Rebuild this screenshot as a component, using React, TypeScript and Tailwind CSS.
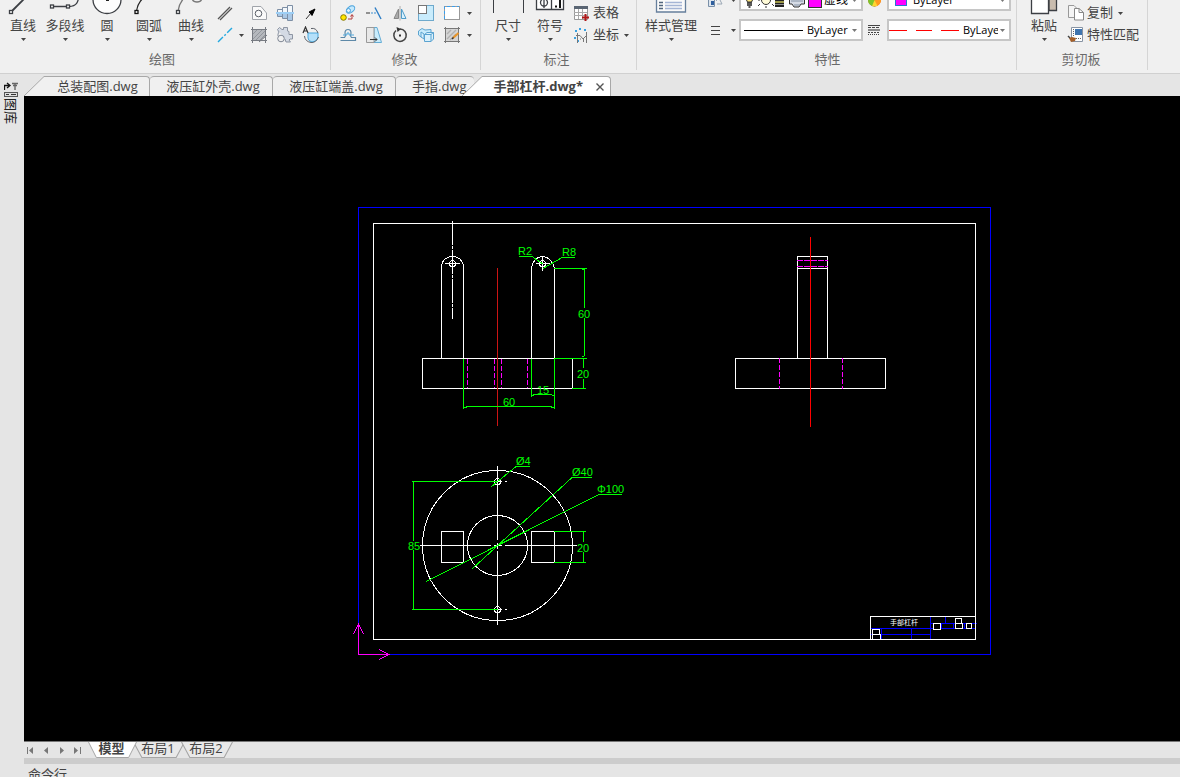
import type { ReactNode } from "react";

// small black triangle used under / next to every drop-down command
function Caret({ className = "text-[#444]" }: { className?: string }) {
  return (
    <svg width="5" height="3" viewBox="0 0 5 3" className={`shrink-0 ${className}`}>
      <path d="M0 0H5L2.5 3Z" fill="currentColor" />
    </svg>
  );
}

function Group({ label, className = "", children }: { label: string; className?: string; children: ReactNode }) {
  return (
    <section className={`flex shrink-0 flex-col border-r border-[#d5d5d5] ${className}`}>
      <div className="flex h-12 items-end overflow-hidden">{children}</div>
      <h2 className="flex h-[22px] items-center justify-center pt-0.5 text-[13px] text-[#6a6a6a]">{label}</h2>
    </section>
  );
}

function BigButton({ label, className = "w-[42px]", children }: { label: string; className?: string; children: ReactNode }) {
  return (
    <button className={`flex shrink-0 flex-col items-center pb-1 ${className}`}>
      <svg width="34" height="32" viewBox="-1 0 34 32" fill="none" stroke="#3c3f44" strokeWidth="1.3">
        {children}
      </svg>
      <span className="text-[13px] leading-[18px] whitespace-nowrap">{label}</span>
      <span className="flex h-[10px] items-center">
        <Caret />
      </span>
    </button>
  );
}

function Tool({ label, children }: { label: string; children: ReactNode }) {
  return (
    <button aria-label={label} className="flex h-[22px] w-[26px] items-center justify-center">
      <svg width="18" height="18" viewBox="0 0 18 18" fill="none" stroke="#5b6068" strokeWidth="1">
        {children}
      </svg>
    </button>
  );
}

function DrawGroup() {
  return (
    <Group label="绘图" className="w-[331px] pl-0.5 [&>h2]:-ml-2">
      <BigButton label="直线">
        <path d="M5 27L19 13" strokeWidth="1.8" />
        <rect x="2.5" y="26.5" width="3" height="3" fill="#fff" />
      </BigButton>
      <BigButton label="多段线">
        <path d="M3 22.5H20C28 22 29 18 30 12" />
        <rect x="1.5" y="21" width="3" height="3" fill="#fff" />
        <rect x="17.5" y="21" width="3" height="3" fill="#fff" />
      </BigButton>
      <BigButton label="圆">
        <circle cx="16" cy="15.5" r="14" fill="#fdfdfd" />
        <rect x="15" y="15" width="3" height="2" fill="#222" stroke="none" />
      </BigButton>
      <BigButton label="圆弧">
        <path d="M3.5 27Q5 17 13 12" stroke="#222" />
        <rect x="2" y="26.5" width="3" height="3" fill="#fff" stroke="#111" />
      </BigButton>
      <BigButton label="曲线">
        <path d="M3 27Q4 19 10 13M17 13Q17 18 22 18T27 13" stroke="#777" />
        <rect x="1.5" y="26.5" width="3" height="3" fill="#fff" />
      </BigButton>
      <div className="flex flex-col pb-0.5">
        <div className="flex">
          <div className="w-[34px]">
            <Tool label="平行线">
              <path d="M2 15L14 3M4 16L16 4" stroke="#555" strokeWidth="1.3" />
            </Tool>
          </div>
          <Tool label="多边形">
            <path d="M2.5 2.5H11L16.5 9V15.5H2.5Z" fill="#fafafa" stroke="#a0a4aa" />
            <circle cx="8.5" cy="9.5" r="3.3" />
          </Tool>
          <Tool label="轴">
            <path d="M1.5 5.5H6.5V12.5H1.5ZM6.5 3.5H11.5V14.5H6.5ZM11.5 1.5H16.5V16.5H11.5Z" fill="#f3f7fb" stroke="#7d8fa5" />
            <path d="M2 10H6V12H2ZM7 10H11V14H7ZM12 10H16V16H12Z" fill="#a9c8e6" stroke="none" />
            <path d="M0 9H18" stroke="#fff" strokeWidth="2" />
            <path d="M0 9H18" stroke="#3b9eeb" />
          </Tool>
          <Tool label="箭头">
            <path d="M4 15L9 9" stroke="#333" />
            <path d="M13 5L7 8L8.5 9.5L10 11.5Z" fill="#000" stroke="#000" />
          </Tool>
        </div>
        <div className="flex">
          <div className="flex w-[34px] items-center">
            <Tool label="中心线">
              <path d="M2 16L16 2" stroke="#23a8e0" strokeWidth="1.4" strokeDasharray="7 2 2 2" />
            </Tool>
            <span className="ml-px">
              <Caret />
            </span>
          </div>
          <Tool label="填充">
            <path d="M2.5 3.5H15.5V11L11 14.5H2.5Z" fill="#b5b8bd" stroke="none" />
            <path d="M3 8L7 4M3 13L12 4M6 14L15 5M10 14L15 9" stroke="#92969c" />
            <path d="M1 3.5H17M1 14.5H17M2.5 1V17M15.5 1V17M9 16L17 9" stroke="#777b82" />
          </Tool>
          <Tool label="齿轮">
            <path
              d="M1.5 3.5L3.5 1.5L6 3.5H7.5V1.5H11.5V5L13 5.5V8.5H16.5V13H14L13 14L14.5 16H10L9 13M1.5 3.5L3 6L2 8V10"
              fill="#d4dae4"
              stroke="#8d95a3"
            />
            <circle cx="5" cy="12.5" r="3.3" fill="#f0f0f0" stroke="#7d8593" />
          </Tool>
          <Tool label="局部放大">
            <path d="M6 7H16V12Q14 16 10 16Q6 15 6 12Z" fill="#b5e0fa" stroke="#4aa8dd" />
            <path d="M9 2.5Q14 1.5 16 7M16.5 11Q14 17 9 16.5Q3 15.5 2.5 10" />
            <path d="M1 7L3.5 1L6 7M2 5H5" stroke="#333" strokeWidth="1.2" />
          </Tool>
        </div>
      </div>
    </Group>
  );
}

function ModifyGroup() {
  return (
    <Group label="修改" className="w-[150px] pl-1 [&>h2]:-ml-1.5">
      <div className="flex flex-col pb-0.5">
        <div className="flex items-center">
          <Tool label="复制对象">
            <ellipse cx="11.5" cy="5.5" rx="4.7" ry="3" transform="rotate(-35 11.5 5.5)" fill="#c6e9fc" stroke="#4aa3dd" />
            <circle cx="9.5" cy="6.5" r="2" fill="#dff3fd" stroke="#4aa3dd" />
            <circle cx="4.5" cy="13.5" r="2.8" fill="#ffe600" stroke="#8a7a00" />
            <path d="M9 15H13V11M11.5 12.5L13 10.5L14.5 12.5" stroke="#b33a3a" />
          </Tool>
          <Tool label="延伸">
            <path d="M1 9H5" stroke="#333" />
            <path d="M6 9H12" stroke="#3c8fd0" strokeDasharray="2 1" />
            <path d="M10 3.5L16 15" stroke="#2b7cc4" strokeWidth="1.4" />
          </Tool>
          <Tool label="镜像">
            <path d="M7.5 5V14.5H3Z" fill="#aaa" stroke="#888" />
            <path d="M10.5 5V14.5H15Z" fill="#d8f0fd" stroke="#4f9cc9" />
            <path d="M9 2V16.5" stroke="#aaa" />
          </Tool>
          <Tool label="缩放">
            <rect x="1.5" y="1.5" width="15" height="15" fill="#c9ecfc" stroke="#6ea9cc" />
            <rect x="1.5" y="1.5" width="8" height="8" fill="#fff" stroke="#777" />
          </Tool>
          <Tool label="拉伸">
            <rect x="1.5" y="2.5" width="15" height="13" fill="#fff" stroke="#999" />
            <path d="M1.5 15V2.5H16" stroke="#3b9eeb" strokeDasharray="3 2" />
          </Tool>
          <span className="ml-0.5">
            <Caret />
          </span>
        </div>
        <div className="flex items-center">
          <Tool label="偏移">
            <path d="M1.5 11.5H5.5Q7 10 6 7Q6 3.5 9 3.5T12 7Q11 10 12.5 11.5H16.5V14.5H1.5" stroke="#5e89a8" strokeWidth="1.2" />
            <path d="M4 9H8V7H10V9H15" stroke="#4ea8dd" />
          </Tool>
          <Tool label="移动">
            <path d="M9 1.5H12L16.5 16.5H9Z" fill="#c9ecfc" stroke="#64acd5" />
            <path d="M1.5 1.5H9V16.5H1.5Z" fill="#e8e8e8" stroke="#999" />
            <path d="M5 13.5H12M10 11.5L12 13.5L10 15.5" stroke="#333" />
          </Tool>
          <Tool label="旋转">
            <path d="M5 4.5A6.2 6.2 0 1 0 9 3" stroke="#444" strokeWidth="1.5" />
            <path d="M5.5 1L10 3L6.5 6Z" fill="#333" stroke="none" />
            <rect x="8" y="8.5" width="2" height="2" fill="#333" stroke="none" />
          </Tool>
          <Tool label="阵列">
            <path d="M1.5 5L5 2.5L8 4L14 3.5V8L4 11L1.5 9Z" fill="#c9ecfc" stroke="#5ba3d0" />
            <path d="M4 6V11L7 13V8ZM7.5 8.5L10 6.5H16.5V13L14 15.5H7.5ZM7.5 8.5H14V15.5M14 8.5L16.5 6.5" fill="#d9f1fd" stroke="#5ba3d0" />
          </Tool>
          <Tool label="编辑填充">
            <rect x="2.5" y="2.5" width="13" height="13" fill="#d5d5d5" stroke="#777" />
            <path d="M4 8L8 4M4 13L13 4M7 14L13 8" stroke="#b0b0b0" strokeWidth="1.4" />
            <path d="M1 2.5H17M1 15.5H17M2.5 1V17M15.5 1V17" stroke="#777" strokeDasharray="2 1" />
            <path d="M10 12L15.5 7" stroke="#e8952a" strokeWidth="2.2" />
            <path d="M9 13L10.5 11.5" stroke="#333" strokeWidth="1.5" />
          </Tool>
          <span className="ml-0.5">
            <Caret />
          </span>
        </div>
      </div>
    </Group>
  );
}

function AnnotateGroup() {
  return (
    <Group label="标注" className="w-[156px] pl-1.5 [&>h2]:-ml-2.5">
      <BigButton label="尺寸">
        <path d="M1.5 12V29M31.5 12V29" shapeRendering="crispEdges" />
      </BigButton>
      <BigButton label="符号">
        <path d="M2.5 10V25.5H29.5V10M17.5 10V25" fill="#fff" />
        <circle cx="10" cy="18.5" r="3.5" />
        <path d="M10 13V24" />
        <path d="M21 22.5H23M26 14V24" stroke="#111" strokeWidth="2" />
      </BigButton>
      <div className="flex flex-col pb-0.5 pl-px text-[13px]">
        <button className="flex h-[22px] items-center">
          <svg width="18" height="18" viewBox="0 0 18 18" fill="none" className="mr-[3px]">
            <path d="M2.5 3.5H15.5V15.5H2.5Z" fill="#fff" stroke="#999" />
            <path d="M2 3.5H16" stroke="#5a6573" strokeWidth="3" />
            <path d="M2 8.5H15M2 11.5H15M6.5 5V15M10.5 5V15" stroke="#aaa" />
            <path d="M13.5 10V17M10 13.5H17" stroke="#b01818" strokeWidth="2" />
          </svg>
          表格
        </button>
        <button className="flex h-[22px] items-center">
          <svg width="18" height="18" viewBox="0 0 18 18" fill="none" stroke="#777" className="mr-[3px]">
            <path d="M3 5H5M7 3H9M13 3V5M3 11V13M5 15H7" stroke="#3aa0e0" strokeWidth="2" />
            <path d="M5.5 7V17M4 9.5H8L11 13L15 9M11.5 13V16M14.5 6V17M8 13H9" />
          </svg>
          坐标
          <span className="ml-[5px]">
            <Caret />
          </span>
        </button>
      </div>
    </Group>
  );
}

function Combo({ label, value, icon, className = "" }: { label: string; value: string; icon: ReactNode; className?: string }) {
  return (
    <label className="flex h-[22px] w-[124px] items-center border-2 border-[#c6c6c6] bg-white pr-1">
      {icon}
      <select
        aria-label={label}
        defaultValue={value}
        className={`min-w-0 flex-1 appearance-none overflow-hidden bg-transparent text-[11px] leading-4 text-black outline-none ${className}`}
      >
        <option>{value}</option>
      </select>
      <Caret className="ml-0.5 text-[#777]" />
    </label>
  );
}

function PropertyGroup() {
  return (
    <Group label="特性" className="w-[380px] pl-0.5">
      <BigButton label="样式管理" className="w-[64px]">
        <path d="M1.5 10V28H30.5V10" fill="#fafafa" stroke="#667f9c" />
        <path d="M4 18.5H8M4 21.5H8M4 24.5H8" stroke="#52667d" />
        <path d="M10 18.5H27M10 21.5H27M10 24.5H27" stroke="#a5b5d5" />
      </BigButton>
      <div className="flex flex-col gap-2 pb-[7px]">
        <div className="flex items-center">
          <svg width="36" height="22" viewBox="0 0 36 22" fill="none">
            <path d="M5.5 6V17.5H11.5V10" fill="#dde5ee" stroke="#7a90a8" />
            <rect x="8" y="12" width="3" height="4" fill="#2f5f9e" />
            <path d="M13 12L16 9L19 15H14" stroke="#9aa7b5" />
            <path d="M28 10H33L30.5 13Z" fill="#444" />
          </svg>
          <Combo
            label="图层"
            value="虚线"
            className="text-[12px]"
            icon={
              <svg width="83" height="18" viewBox="0 0 83 18" fill="none" className="shrink-0">
                <path d="M4.5 5A4 4 0 0 1 12.5 5Q12.5 8 10.5 11H6.5Q4.5 8 4.5 5Z" fill="#ffe985" stroke="#333" />
                <path d="M6 12H11M6 14H11M7.5 16H9.5" stroke="#222" strokeWidth="1.5" />
                <circle cx="25" cy="9" r="4.5" fill="#fffbd8" stroke="#333" />
                <path d="M25 15V17M19 13L17 15M31 13L33 15M17 9H19" stroke="#333" />
                <path d="M34 9.5H43M34 12.5H43M34 15H43" stroke="#222" strokeWidth="2" />
                <path d="M34 11H43" stroke="#a9a000" />
                <path d="M48.5 7H63.5V13H60L58 16H53L51 13H48.5Z" fill="#d5dbe5" stroke="#333" />
                <path d="M50 10H62M53 14H59" stroke="#8492a5" />
                <rect x="67.5" y="2.5" width="13" height="14" fill="#ff00ff" stroke="#333" />
              </svg>
            }
          />
          <svg width="24" height="22" viewBox="0 0 24 22">
            <circle cx="11.5" cy="11" r="6.5" fill="#e5502f" />
            <path d="M11.5 11L18 10A6.5 6.5 0 0 1 12 17.5Z" fill="#ff9a1f" />
            <path d="M11.5 11L12 17.5A6.5 6.5 0 0 1 5 11Z" fill="#7cc52a" />
            <path d="M11.5 11L14.5 17L9 17.2Z" fill="#ffd62f" />
          </svg>
          <Combo label="颜色" value="ByLayer" icon={<span className="mr-1.5 ml-1.5 size-3 shrink-0 border border-[#2777d0] bg-[#ff00ff]" />} />
        </div>
        <div className="flex items-center">
          <svg width="36" height="22" viewBox="0 0 36 22" fill="none">
            <path d="M8 7.5H17M8 11.5H17M8 15.5H17" stroke="#444" shapeRendering="crispEdges" />
            <path d="M28 10H33L30.5 13Z" fill="#444" />
          </svg>
          <Combo label="线宽" value="ByLayer" icon={<span className="mr-1 ml-[3px] h-px w-[59px] shrink-0 bg-black" />} />
          <svg width="24" height="22" viewBox="0 0 24 22" fill="none" stroke="#444" shapeRendering="crispEdges">
            <path d="M5 6.5H17" />
            <path d="M5 8.5H17" strokeDasharray="3 1" />
            <path d="M5 11H17" stroke="#888" strokeWidth="2" />
            <path d="M5 13.5H17" strokeDasharray="2 1" />
            <path d="M5 15.5H17" strokeDasharray="1 1" />
          </svg>
          <Combo
            label="线型"
            value="ByLayer"
            icon={
              <svg width="70" height="2" viewBox="0 0 70 2" className="mr-1 shrink-0">
                <path d="M0 1.5H18M27 1.5H43M52 1.5H70" stroke="#f00" shapeRendering="crispEdges" />
              </svg>
            }
          />
        </div>
      </div>
    </Group>
  );
}

function ClipboardGroup() {
  return (
    <Group label="剪切板" className="w-[131px] pl-1.5 [&>h2]:-ml-2">
      <BigButton label="粘贴">
        <path d="M21 10H28.5V26.5H21Z" fill="#c9bcae" />
        <path d="M3.5 10V29.5H20.5V10" fill="#fff" />
      </BigButton>
      <div className="flex flex-col pb-0.5 pl-0.5 text-[13px]">
        <button className="flex h-[22px] items-center">
          <svg width="18" height="18" viewBox="0 0 18 18" className="mr-0.5">
            <path d="M1.5 1.5H7L10.5 5V13.5H1.5Z" fill="#f4f4f4" stroke="#999" />
            <path d="M7.5 4.5H12L16.5 8.5V16H7.5Z" fill="#fff" stroke="#888" />
            <path d="M12 4.5V8.5H16.5" fill="none" stroke="#888" />
          </svg>
          复制
          <span className="ml-[5px]">
            <Caret />
          </span>
        </button>
        <button className="flex h-[22px] items-center whitespace-nowrap">
          <svg width="18" height="18" viewBox="0 0 18 18" className="mr-0.5">
            <path d="M4.5 1.5H15.5V15.5H4.5Z" fill="#fff" stroke="#8793a3" />
            <rect x="8" y="3" width="7" height="6" fill="#3f75b0" />
            <path d="M6.5 3V10M9 12.5H14" stroke="#666" strokeDasharray="1 1" />
            <path d="M2 12L5 11L9 12L8 15L4 16Z" fill="#a5602a" />
            <path d="M1 10L3 12" stroke="#444" strokeWidth="1.5" />
          </svg>
          特性匹配
        </button>
      </div>
    </Group>
  );
}

const FILES = [
  { name: "总装配图.dwg", width: "w-[106px] justify-center pl-0.5 border-r" },
  { name: "液压缸外壳.dwg", width: "w-[123px] justify-center pl-1 border-r rounded-tl-sm" },
  { name: "液压缸端盖.dwg", width: "w-[123px] justify-center pl-1 border-r rounded-tl-sm" },
  { name: "手指.dwg", width: "w-[78px] pl-4 rounded-tl-sm" },
];

function FileTabs() {
  return (
    <nav className="flex h-[22px] shrink-0 items-end overflow-hidden bg-[#e5e5e5] text-[13px] leading-4 whitespace-nowrap">
      <svg width="20" height="20" viewBox="0 0 20 20" className="shrink-0">
        <path d="M0 20L20 .5V20Z" fill="#f0f0f0" />
        <path d="M0 20L20 .5" stroke="#a8a8a8" />
      </svg>
      {FILES.map((f) => (
        <button key={f.name} className={`${f.width} flex h-5 shrink-0 items-center rounded-tr-sm border-t border-[#a8a8a8] bg-[#f0f0f0] pb-0.5`}>
          {f.name}
        </button>
      ))}
      <svg width="20" height="20" viewBox="0 0 20 20" className="-ml-3 shrink-0">
        <path d="M0 20L20 .5V20Z" fill="#fff" />
        <path d="M0 20L20 .5" stroke="#a8a8a8" />
      </svg>
      <div className="flex h-5 w-[129px] shrink-0 items-center justify-end rounded-tr-sm border-t border-r border-[#a8a8a8] bg-white pr-1.5">
        <button className="pb-0.5 font-bold">手部杠杆.dwg*</button>
        <button aria-label="关闭" className="ml-[13px]">
          <svg width="8" height="8" viewBox="0 0 8 8">
            <path d="M.5 .5L7.5 7.5M7.5 .5L.5 7.5" stroke="#555" strokeWidth="1.4" />
          </svg>
        </button>
      </div>
    </nav>
  );
}

// dimension texts: x, baseline, value
const DIMS: [number, number, string][] = [
  [518, 255, "R2"],
  [562, 256, "R8"],
  [578, 318, "60"],
  [577, 378, "20"],
  [537, 394, "15"],
  [503, 406, "60"],
  [516, 465, "Ø4"],
  [572, 476, "Ø40"],
  [597, 493, "Φ100"],
  [408, 550, "85"],
  [577, 552, "20"],
];

function Drawing() {
  return (
    <svg
      viewBox="24 96 1156 645"
      preserveAspectRatio="xMidYMid meet"
      className="min-h-0 w-full flex-1 bg-black"
      fill="none"
      strokeWidth="1"
      shapeRendering="crispEdges"
    >
      {/* sheet frame */}
      <rect x="358.5" y="207.5" width="632" height="447" stroke="#0000ff" />
      <rect x="373.5" y="223.5" width="602" height="416" stroke="#fff" />

      {/* front view */}
      <g stroke="#fff">
        <rect x="422.5" y="358.5" width="150" height="30" />
        <path d="M441.5 358V265Q444 256.5 452.5 256.5Q461 256.5 463.5 265V358" />
        <path d="M531.5 358V268Q534 256.5 542.5 256.5Q551 256.5 554.5 268V358" />
        <path d="M452.5 221V319" strokeDasharray="24 1 3 1" />
        <path d="M445 263.5H460M536 263.5H550M542.5 256V271" />
        <circle cx="452.5" cy="263.5" r="3" />
        <circle cx="542.5" cy="263.5" r="3" />
      </g>
      <path d="M467.5 359V388M494.5 359V388M501.5 359V388M527.5 359V388" stroke="#ff00ff" strokeDasharray="5 2" />
      <path d="M497.5 268V426" stroke="#cc1414" />

      {/* side view */}
      <g stroke="#fff">
        <rect x="735.5" y="358.5" width="150" height="30" />
        <path d="M797.5 358V256.5H827.5V358M797 268.5H828" />
      </g>
      <path d="M797 260.5H828M797 266.5H828" stroke="#ff00ff" strokeDasharray="6 1" />
      <path d="M779.5 358V389M842.5 358V389" stroke="#ff00ff" strokeDasharray="5 2" />
      <path d="M810.5 237V427" stroke="#ff0000" />

      {/* top view */}
      <g stroke="#fff">
        <circle cx="497.5" cy="545.5" r="75" />
        <circle cx="497.5" cy="545.5" r="30" />
        <circle cx="497.5" cy="481.5" r="3" />
        <circle cx="497.5" cy="609.5" r="3" />
        <rect x="441.5" y="531.5" width="22" height="31" />
        <rect x="531.5" y="531.5" width="23" height="31" />
        <path d="M420 545.5H491M494 545.5H502M505 545.5H577" />
        <path d="M497.5 466V540M497.5 543V549M497.5 551V625" />
        <path d="M497 481.5H502M505 481.5H507M497 609.5H502M505 609.5H507" />
      </g>

      {/* dimensions */}
      <g stroke="#00ff00">
        <path d="M519 256.5H532L543 264M575 257.5H562L543 268.5" />
        <path d="M554 268.5H587M554 358.5H587M572 388.5H586" />
        <path d="M582 269.5H585M584.5 269V308M584.5 318V356M582 356.5H584M583.5 359V368M583.5 379V388" />
        <path d="M463.5 359V409M531.5 359V397M554.5 359V409" />
        <path d="M532 395.5H534M533 394.5H552M552 395.5H554M464 407.5H467M466 406.5H552M551 407.5H554" />
        <path d="M530 466.5H516L491 487M592 477.5H572L472 569M622 494.5H599L426 581.5" />
        <path d="M412 481.5H498M412 609.5H498M413.5 481V541M413.5 550V610" />
        <path d="M554 531.5H586M554 562.5H586M583.5 531V542M583.5 552V562" />
      </g>
      <g fill="#00ff00" className="font-['Liberation_Sans',sans-serif] text-[11px]">
        {DIMS.map(([x, y, value]) => (
          <text key={`${x}-${y}`} x={x} y={y}>
            {value}
          </text>
        ))}
      </g>

      {/* title block */}
      <path
        d="M870 628.5H975M870 634.5H930M881.5 628V639M911.5 628V639M930.5 617V639M931 623.5H977M945.5 617V623M941.5 623V628M953.5 623V628M964.5 623V628"
        stroke="#0000ff"
      />
      <rect x="870.5" y="616.5" width="105" height="23" stroke="#fff" />
      <g stroke="#fff" fill="#000">
        <rect x="872.5" y="629.5" width="7" height="5" />
        <rect x="872.5" y="634.5" width="8" height="5" />
        <rect x="933.5" y="623.5" width="7" height="6" />
        <rect x="955.5" y="618.5" width="6" height="5" />
        <rect x="955.5" y="623.5" width="7" height="5" />
        <rect x="966.5" y="623.5" width="5" height="5" />
      </g>
      <text x="890" y="625" fill="#fff" className="text-[7px]">
        手部杠杆
      </text>

      {/* UCS icon */}
      <path d="M353.5 634L358.5 624.5L363.5 634M358.5 625V654.5H389M379 649.5L389 654.5L379 659.5" stroke="#ff00ff" />
    </svg>
  );
}

function SheetTab({ label, active = false }: { label: string; active?: boolean }) {
  return (
    <button className={`grid h-4 ${active ? "z-10 w-[49px] font-bold" : "-ml-1 w-[52px]"}`}>
      <svg width="100%" height="16" viewBox="0 0 50 16" preserveAspectRatio="none" className="[grid-area:1/1]">
        <path d="M.5 0L8.5 15.5H41.5L49.5 0" fill={active ? "#fff" : "#e9e9e9"} stroke="#a5a5a5" />
      </svg>
      <span className="pr-0.5 text-[13px] leading-[13px] [grid-area:1/1]">{label}</span>
    </button>
  );
}

function SheetBar() {
  return (
    <div className="flex h-[17px] shrink-0 border-t border-[#777] bg-[#e5e5e5]">
      <div className="flex w-16 items-center pl-0.5 text-[#777]">
        <button aria-label="第一个" className="flex w-4 justify-start pl-px">
          <svg width="7" height="7" viewBox="0 0 7 7" fill="currentColor">
            <path d="M0 0H1V7H0ZM6 0V7L2 3.5Z" />
          </svg>
        </button>
        <button aria-label="上一个" className="flex w-4 justify-start pl-px">
          <svg width="7" height="7" viewBox="0 0 7 7" fill="currentColor">
            <path d="M5 0V7L1 3.5Z" />
          </svg>
        </button>
        <button aria-label="下一个" className="flex w-4 justify-start pl-px">
          <svg width="7" height="7" viewBox="0 0 7 7" fill="currentColor">
            <path d="M2 0V7L6 3.5Z" />
          </svg>
        </button>
        <button aria-label="最后一个" className="flex w-4 justify-start pl-px">
          <svg width="7" height="7" viewBox="0 0 7 7" fill="currentColor">
            <path d="M0 0V7L4 3.5ZM6 0H7V7H6Z" />
          </svg>
        </button>
      </div>
      <SheetTab label="模型" active />
      <SheetTab label="布局1" />
      <SheetTab label="布局2" />
    </div>
  );
}

export default function App() {
  return (
    <div className="flex h-screen flex-col overflow-hidden bg-[#e5e5e5] font-['Open_Sans','Noto_Sans_CJK_SC',sans-serif] text-[#444]">
      <header className="flex shrink-0 overflow-hidden border-b border-[#d0d0d0] bg-[#f0f0f0] pb-[3px]">
        <DrawGroup />
        <ModifyGroup />
        <AnnotateGroup />
        <PropertyGroup />
        <ClipboardGroup />
      </header>
      <div className="flex min-h-0 flex-1">
        <aside className="w-6 shrink-0 pt-2">
          <button className="flex flex-col items-start pl-1">
            <svg width="14" height="16" viewBox="0 0 14 16" fill="none" stroke="#333">
              <path d="M.5 8V3.5H5M3 1L6 3.5L3 6" stroke="#111" strokeWidth="1.3" />
              <path d="M8 1.5H14M9 3.5H13M11 2V8" stroke="#666" strokeWidth="1.4" />
              <rect x=".5" y="10.5" width="13" height="4" fill="#ddd" stroke="#555" />
              <path d="M2 12.5H5M7 12.5H12" />
            </svg>
            <span className="text-[13px] leading-[14px] text-[#222] [text-orientation:sideways] [writing-mode:vertical-rl]">图库</span>
          </button>
        </aside>
        <main className="flex min-w-0 flex-1 flex-col">
          <FileTabs />
          <Drawing />
          <SheetBar />
          <div className="h-1.5 shrink-0 bg-[#ccc]" />
          <div className="h-[13px] shrink-0 overflow-hidden pl-1 text-[13px] leading-5">命令行</div>
        </main>
      </div>
    </div>
  );
}
